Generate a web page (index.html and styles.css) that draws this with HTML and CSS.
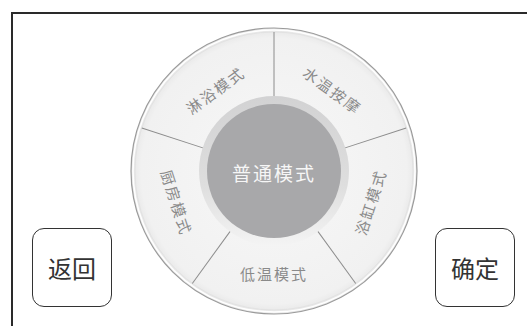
FILE: index.html
```html
<!DOCTYPE html>
<html lang="zh">
<head>
<meta charset="utf-8">
<link rel="stylesheet" href="styles.css">
</head>
<body>
<div class="frame">
  <button class="btn">返回</button>
  <svg class="wheel" width="290" height="290" viewBox="0 0 290 290">
    <defs>
      <radialGradient id="seg" cx="145" cy="145" r="143" gradientUnits="userSpaceOnUse">
        <stop offset="0.5" stop-color="#f4f4f4"/>
        <stop offset="0.93" stop-color="#f1f1f1"/>
        <stop offset="1" stop-color="#e6e6e6"/>
      </radialGradient>
      <linearGradient id="ring" x1="0" y1="0" x2="0" y2="1">
        <stop offset="0" stop-color="#d2d2d3"/>
        <stop offset="0.6" stop-color="#dedede"/>
        <stop offset="1" stop-color="#f4f4f4"/>
      </linearGradient>
    </defs>
    <circle cx="145" cy="145" r="143" fill="url(#seg)" stroke="#9a9a9a" stroke-width="1.2"/>
    <circle cx="145" cy="145" r="141" fill="none" stroke="#ffffff" stroke-width="1.5"/>
    <circle cx="145" cy="145" r="139" fill="none" stroke="#e2e2e2" stroke-width="1"/>
    <g stroke="#8c8c8c" stroke-width="1">
      <line x1="145" y1="71" x2="145" y2="6" transform="rotate(0 145 145)"/>
      <line x1="145" y1="71" x2="145" y2="6" transform="rotate(72 145 145)"/>
      <line x1="145" y1="71" x2="145" y2="6" transform="rotate(144 145 145)"/>
      <line x1="145" y1="71" x2="145" y2="6" transform="rotate(216 145 145)"/>
      <line x1="145" y1="71" x2="145" y2="6" transform="rotate(288 145 145)"/>
    </g>
    <circle cx="145" cy="145" r="75" fill="url(#ring)"/>
    <circle cx="145" cy="145" r="67" fill="#a8a8aa"/>
    <g class="label">
      <text x="145" y="45" transform="rotate(-36 145 145)">淋浴模式</text>
      <text x="145" y="45" transform="rotate(36 145 145)">水温按摩</text>
      <text x="145" y="246" transform="rotate(-72 145 145)">浴缸模式</text>
      <text x="145" y="247" transform="rotate(0 145 145)">低温模式</text>
      <text x="145" y="247" transform="rotate(72 145 145)">厨房模式</text>
    </g>
    <text class="center" x="145" y="146">普通模式</text>
  </svg>
  <button class="btn">确定</button>
</div>
</body>
</html>
```
FILE: styles.css
```css
html, body {
  margin: 0;
  padding: 0;
  background: #ffffff;
  overflow: hidden;
}
body {
  width: 527px;
  height: 326px;
  font-family: "Noto Sans CJK SC", "Noto Sans", sans-serif;
}
.frame {
  box-sizing: border-box;
  margin: 12px 0 0 11px;
  width: 516px;
  height: 314px;
  border-top: 2px solid #2a2a2a;
  border-left: 2px solid #2a2a2a;
  display: flex;
  align-items: flex-start;
  padding-left: 19px;
}
.btn {
  box-sizing: border-box;
  width: 80px;
  height: 79px;
  margin-top: 214px;
  border: 1.5px solid #333333;
  border-radius: 12px;
  background: #ffffff;
  font-family: "Noto Sans CJK SC", "Noto Sans", sans-serif;
  font-size: 24px;
  color: #333333;
  padding: 0;
  display: flex;
  align-items: center;
  justify-content: center;
  flex: none;
}
.wheel {
  display: block;
  margin: 12px 16px 0 17px;
  flex: none;
}
.label text {
  font-family: "Noto Sans CJK SC", sans-serif;
  font-size: 15px;
  fill: #8a8a8a;
  text-anchor: middle;
  dominant-baseline: central;
  letter-spacing: 2px;
}
.center {
  font-family: "Noto Sans CJK SC", sans-serif;
  font-size: 19px;
  fill: #f6f6f6;
  text-anchor: middle;
  dominant-baseline: central;
  letter-spacing: 2px;
}
```
